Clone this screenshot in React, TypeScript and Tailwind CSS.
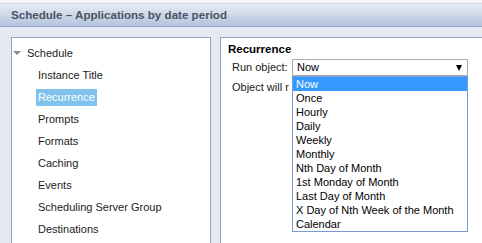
import React from 'react';

const treeItems = [
  'Instance Title',
  'Recurrence',
  'Prompts',
  'Formats',
  'Caching',
  'Events',
  'Scheduling Server Group',
  'Destinations',
];

const runOptions = [
  'Now',
  'Once',
  'Hourly',
  'Daily',
  'Weekly',
  'Monthly',
  'Nth Day of Month',
  '1st Monday of Month',
  'Last Day of Month',
  'X Day of Nth Week of the Month',
  'Calendar',
];

export default function App() {
  const selected = 'Recurrence';
  const runValue = 'Now';

  return (
    <div className="w-[482px] h-[243px] overflow-hidden bg-[#e4e9f2] font-['Liberation_Sans',Arial,sans-serif] text-[11px] text-[#1b1b1b]">
      {/* Top strip */}
      <div className="h-[4px] bg-[#f3f4f6] border-b border-[#d3d9e3]" />

      {/* Dialog header */}
      <div className="h-[23px] flex items-center pl-[11px] bg-gradient-to-b from-[#e6ecf4] to-[#b3c4dc] border-b border-[#8fa4c4]">
        <span className="text-[11.6px] font-bold text-[#4a5364]">Schedule – Applications by date period</span>
      </div>

      {/* Body */}
      <div className="flex gap-[9px] pl-[11px] pt-[10px]">
        {/* Left tree panel */}
        <div className="w-[200px] h-[220px] shrink-0 bg-white border border-[#8fa4c8] pt-[4px]">
          <div className="h-[22px] flex items-center">
            <span className="ml-[1px] w-0 h-0 border-l-[4px] border-r-[4px] border-t-[4px] border-l-transparent border-r-transparent border-t-[#8a8a8a]" />
            <span className="ml-[6px]">Schedule</span>
          </div>
          {treeItems.map((item) => (
            <div key={item} className="h-[22px] flex items-center pl-[24px]">
              <span
                className={
                  item === selected
                    ? 'h-[17px] flex items-center px-[2px] bg-[#7fc3ec] text-white'
                    : 'px-[2px]'
                }
              >
                {item}
              </span>
            </div>
          ))}
        </div>

        {/* Right content panel */}
        <div className="relative w-[300px] h-[220px] shrink-0 bg-white border border-[#8fa4c8] pl-[7px] pt-[4px]">
          <div className="h-[14px] leading-[14px] text-[11.5px] font-bold text-black">Recurrence</div>

          <div className="mt-[3px] flex items-center pl-[4px] h-[17px]">
            <span className="w-[60px] shrink-0">Run object:</span>
            <div className="relative w-[176px] h-[17px] border border-[#abadb3] bg-white flex items-center pl-[4px]">
              <span className="text-black">{runValue}</span>
              <span className="absolute right-[5px] top-[5px] w-0 h-0 border-l-[3.5px] border-r-[3.5px] border-t-[6px] border-l-transparent border-r-transparent border-t-black" />

              {/* Open dropdown list */}
              <div className="absolute left-[-1px] top-[16px] w-[176px] bg-white border border-[#7a9cd0] z-10">
                {runOptions.map((opt) => (
                  <div
                    key={opt}
                    className={
                      opt === runValue
                        ? 'h-[14px] leading-[14px] pl-[3px] bg-[#3399ff] text-white'
                        : 'h-[14px] leading-[14px] pl-[3px] text-black'
                    }
                  >
                    {opt}
                  </div>
                ))}
              </div>
            </div>
          </div>

          {/* partly hidden by the open list */}
          <div className="mt-[4px] ml-[4px] w-[60px] h-[14px] leading-[14px] whitespace-nowrap overflow-hidden">Object will r</div>
        </div>
      </div>
    </div>
  );
}
